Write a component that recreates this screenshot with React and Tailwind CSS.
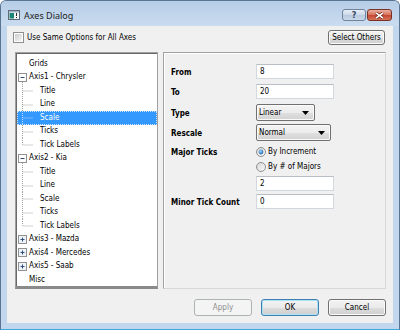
import React from "react";

const UI = "font-['DejaVu_Sans_Condensed','DejaVu_Sans',sans-serif] font-stretch-condensed text-[8px] text-black";
const BOLD = "font-['DejaVu_Sans',sans-serif] font-bold text-[8px] text-black pt-[2px]";

const TREE = [
  { t: "Grids", k: "leaf" },
  { t: "Axis1 - Chrysler", k: "open" },
  { t: "Title", k: "child" },
  { t: "Line", k: "child" },
  { t: "Scale", k: "child", sel: true },
  { t: "Ticks", k: "child" },
  { t: "Tick Labels", k: "last" },
  { t: "Axis2 - Kia", k: "open" },
  { t: "Title", k: "child" },
  { t: "Line", k: "child" },
  { t: "Scale", k: "child" },
  { t: "Ticks", k: "child" },
  { t: "Tick Labels", k: "last" },
  { t: "Axis3 - Mazda", k: "closed" },
  { t: "Axis4 - Mercedes", k: "closed" },
  { t: "Axis5 - Saab", k: "closed" },
  { t: "Misc", k: "leaf" },
];

function TreeRow({ item }) {
  const { t, k, sel } = item;
  const child = k === "child" || k === "last";
  const lc = sel ? "#b8d8ff" : "#a0a0a0";
  return (
    <div
      className={`flex h-[13.5px] items-center ${
        sel
          ? "bg-[#3399ff] text-white outline-1 outline-dotted outline-[#cfe5ff] -outline-offset-1"
          : ""
      }`}
    >
      <svg width={child ? 22 : 11} className="h-full shrink-0 overflow-visible">
        {child && (
          <>
            <line x1="5.5" y1="0" x2="5.5" y2={k === "last" ? "50%" : "100%"} stroke={lc} strokeDasharray="1 1" />
            <line x1="6.5" y1="7" x2="16" y2="7" stroke={lc} strokeDasharray="1 1" />
          </>
        )}
        {(k === "open" || k === "closed") && (
          <>
            {k === "open" && (
              <line x1="5.5" y1="11" x2="5.5" y2="100%" stroke="#a0a0a0" strokeDasharray="1 1" />
            )}
            <rect x="1.5" y="2.5" width="8" height="8" fill={k === "closed" ? "#eef3fa" : "#ffffff"} stroke="#919191" />
            <line x1="3.5" y1="6.5" x2="7.5" y2="6.5" stroke="#2e4e7e" />
            {k === "closed" && <line x1="5.5" y1="4.5" x2="5.5" y2="8.5" stroke="#2e4e7e" />}
          </>
        )}
      </svg>
      <span className={`ml-[1px] whitespace-nowrap leading-none ${sel ? "text-white" : "text-black"}`}>{t}</span>
    </div>
  );
}

function Input({ value }) {
  return (
    <div className="flex h-[15px] w-[78px] items-center border border-[#d3d8de] border-t-[#b9bdc4] bg-white pl-[3px] leading-none">
      {value}
    </div>
  );
}

function Select({ value, w }) {
  return (
    <div
      className={`flex h-[17px] ${w} items-center rounded-[2px] border border-[#707070] bg-[linear-gradient(#f4f4f4_0%,#ececec_50%,#e0e0e0_51%,#d2d2d2_100%)] pl-[2px] pr-[5px] leading-none shadow-[inset_0_0_0_1px_#fbfbfb]`}
    >
      <span className="flex-1">{value}</span>
      <svg width="7" height="4" viewBox="0 0 7 4">
        <path d="M0 0h7L3.5 4z" fill="#000" />
      </svg>
    </div>
  );
}

function Radio({ on, label }) {
  return (
    <div className="flex h-[14px] items-center">
      <svg width="10" height="10" viewBox="0 0 10 10" className="shrink-0">
        <defs>
          <linearGradient id="rgoff" x1="0" y1="0" x2="1" y2="1">
            <stop offset="0" stopColor="#d6d6d6" />
            <stop offset="1" stopColor="#fbfbfb" />
          </linearGradient>
          <radialGradient id="rgon" cx="0.4" cy="0.35" r="0.7">
            <stop offset="0" stopColor="#9fd3ff" />
            <stop offset="1" stopColor="#1d5fa8" />
          </radialGradient>
        </defs>
        <circle cx="5" cy="5" r="4.5" fill="url(#rgoff)" stroke="#8e8f8f" />
        {on && <circle cx="5" cy="5" r="2.4" fill="url(#rgon)" />}
      </svg>
      <span className="ml-[2px] leading-none">{label}</span>
    </div>
  );
}

function Btn({ children, kind }) {
  const base =
    "flex h-[17px] w-[58px] items-center justify-center rounded-[3px] border leading-none";
  if (kind === "disabled")
    return (
      <div className={`${base} border-[#adb2b5] bg-[#f4f4f4] text-[#8d8d8d]`}>{children}</div>
    );
  if (kind === "default")
    return (
      <div
        className={`${base} border-[#3c7fb1] bg-[linear-gradient(#f2f2f2_0%,#ebebeb_50%,#dddddd_51%,#cfcfcf_100%)] shadow-[inset_0_0_0_1px_#b0e2f7]`}
      >
        {children}
      </div>
    );
  return (
    <div
      className={`${base} border-[#707070] bg-[linear-gradient(#f2f2f2_0%,#ebebeb_50%,#dddddd_51%,#cfcfcf_100%)] shadow-[inset_0_0_0_1px_#fbfbfb]`}
    >
      {children}
    </div>
  );
}

export default function App() {
  return (
    <div className={`h-[330px] w-[400px] overflow-hidden bg-white ${UI}`}>
      <div className="flex h-[330px] w-[400px] flex-col rounded-t-[6px] border border-[#5b7591] border-b-[#3fa9d9] bg-[#c2d7ed] pb-[6px]">
        {/* title bar */}
        <div className="flex h-[25px] shrink-0 rounded-t-[5px] bg-[linear-gradient(#b6cde7,#cadcef)]">
          <div className="ml-[7px] mt-[9px] self-start">
            <svg width="12" height="10" viewBox="0 0 12 10">
              <rect x="0.5" y="0.5" width="11" height="9" fill="#f3f5f7" stroke="#5d6b78" />
              <rect x="1" y="1" width="10" height="1.5" fill="#9db4c9" />
              <rect x="1.5" y="3" width="4.5" height="5.5" fill="#1d8574" />
              <rect x="8" y="3" width="1" height="3" fill="#222" />
              <rect x="8" y="7" width="1" height="1" fill="#222" />
            </svg>
          </div>
          <div className="ml-[4px] mt-[9px] self-start font-['Noto_Sans',sans-serif] text-[9px] leading-[11px] text-[#1b1b1b]">
            Axes Dialog
          </div>
          <div className="ml-auto mr-[7px] mt-[8px] flex self-start gap-[1px]">
            <div className="flex h-[12px] w-[24px] items-center justify-center rounded-[3px] border border-[#6f849c] bg-[linear-gradient(#e8eef6,#cbd8e8_50%,#b9cadf_51%,#cad8e8)] font-['DejaVu_Sans',sans-serif] text-[9px] font-bold leading-none text-[#34475f]">
              ?
            </div>
            <div className="flex h-[12px] w-[25px] items-center justify-center rounded-[3px] border border-[#7a3226] bg-[linear-gradient(#eab0a2,#d6705b_50%,#c4452d_51%,#d8745d)]">
              <svg width="9" height="7" viewBox="0 0 9 7">
                <path d="M1 0.8L8 6.2M8 0.8L1 6.2" stroke="#6b2418" strokeWidth="3" />
                <path d="M1 0.8L8 6.2M8 0.8L1 6.2" stroke="#ffffff" strokeWidth="1.6" />
              </svg>
            </div>
          </div>
        </div>

        {/* client area */}
        <div className="mx-[6px] flex flex-1 flex-col bg-[#f0f0f0]">
          <div className="mt-[4px] flex h-[15px] items-center justify-between pl-[6px] pr-[8px]">
            <div className="flex items-center">
              <div className="h-[11px] w-[11px] border border-[#8e8f8f] bg-white p-[1px]">
                <div className="h-full w-full bg-[linear-gradient(135deg,#cbcbcb,#f7f7f7)]" />
              </div>
              <span className="ml-[3px] leading-none">Use Same Options for All Axes</span>
            </div>
            <div className="flex h-[15px] w-[57px] items-center justify-center rounded-[3px] border border-[#707070] bg-[linear-gradient(#f2f2f2_0%,#ebebeb_50%,#dddddd_51%,#cfcfcf_100%)] leading-none shadow-[inset_0_0_0_1px_#fbfbfb]">
              Select Others
            </div>
          </div>

          <div className="mt-[7px] flex h-[237px] gap-[5px] pl-[8px] pr-[7px]">
            {/* tree */}
            <div className="w-[143px] border border-[#a0a0a0] border-b-[3px] border-b-[#8a8a8a]">
              <div className="h-full border-l border-t border-[#696969] bg-white pt-[3px]">
                {TREE.map((it, i) => (
                  <TreeRow key={i} item={it} />
                ))}
              </div>
            </div>

            {/* properties */}
            <div className="flex-1 border border-[#a0a0a0] border-b-[#d8d8d8] border-r-[#d8d8d8]">
              <div className="h-full border-l border-t border-white pl-[6px]">
                <div className="mt-[10px] flex h-[15px] items-center">
                  <div className={`w-[85px] ${BOLD}`}>From</div>
                  <Input value="8" />
                </div>
                <div className="mt-[5px] flex h-[15px] items-center">
                  <div className={`w-[85px] ${BOLD}`}>To</div>
                  <Input value="20" />
                </div>
                <div className="mt-[5px] flex h-[17px] items-center">
                  <div className={`w-[85px] ${BOLD}`}>Type</div>
                  <Select value="Linear" w="w-[59px]" />
                </div>
                <div className="mt-[3px] flex h-[17px] items-center">
                  <div className={`w-[85px] ${BOLD}`}>Rescale</div>
                  <Select value="Normal" w="w-[75px]" />
                </div>
                <div className="mt-[4px] flex h-[14px] items-center">
                  <div className={`w-[85px] ${BOLD}`}>Major Ticks</div>
                  <Radio on label="By Increment" />
                </div>
                <div className="mt-[1px] flex h-[14px] items-center">
                  <div className="w-[85px]" />
                  <Radio label="By # of Majors" />
                </div>
                <div className="mt-[2px] flex h-[15px] items-center">
                  <div className="w-[85px]" />
                  <Input value="2" />
                </div>
                <div className="mt-[3px] flex h-[15px] items-center">
                  <div className={`w-[85px] ${BOLD}`}>Minor Tick Count</div>
                  <Input value="0" />
                </div>
              </div>
            </div>
          </div>

          <div className="mt-[10px] flex h-[17px] justify-end gap-[9px] pr-[7px]">
            <Btn kind="disabled">Apply</Btn>
            <Btn kind="default">OK</Btn>
            <Btn>Cancel</Btn>
          </div>
        </div>
      </div>
    </div>
  );
}
